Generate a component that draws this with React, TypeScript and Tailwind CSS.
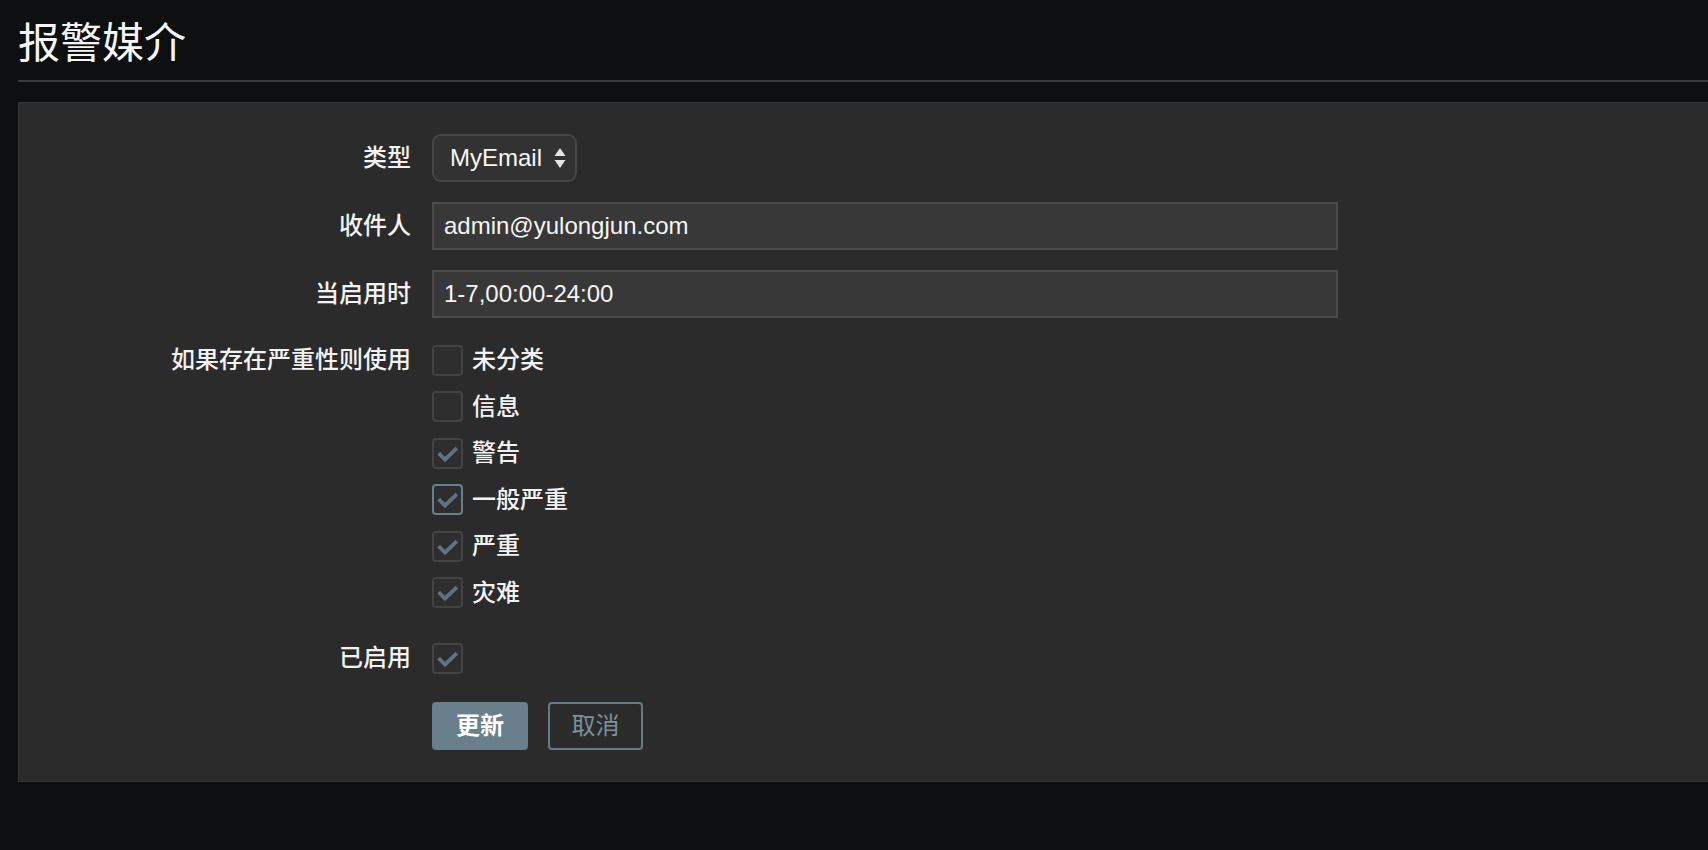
import React, { useState } from "react";

const font = { fontFamily: '"Liberation Sans", "Noto Sans CJK SC", sans-serif' };

type Severity = { label: string; checked: boolean; focus?: boolean };

function CheckBox({ checked, focus }: { checked: boolean; focus?: boolean }) {
  return (
    <span
      className={`flex h-[31px] w-[31px] shrink-0 items-center justify-center rounded-[4px] border-2 bg-[#2e2e2e] ${
        focus ? "border-[#687f8d]" : "border-[#434343]"
      }`}
    >
      {checked && (
        <svg width="31" height="31" viewBox="0 0 31 31" className="-m-[2px]">
          <path d="M8 16.5 L13 21.5 L23.5 11.5" fill="none" stroke="#5f7482" strokeWidth="3.8" strokeLinecap="square" />
        </svg>
      )}
    </span>
  );
}

function Row({ label, children, className = "" }: { label: string; children: React.ReactNode; className?: string }) {
  return (
    <div className={`flex items-center ${className}`}>
      <div className="w-[392px] shrink-0 text-right text-[24px] font-medium text-[#f2f2f2]">{label}</div>
      <div className="ml-[21px] flex-1">{children}</div>
    </div>
  );
}

export default function App() {
  const [sev, setSev] = useState<Severity[]>([
    { label: "未分类", checked: false },
    { label: "信息", checked: false },
    { label: "警告", checked: true },
    { label: "一般严重", checked: true, focus: true },
    { label: "严重", checked: true },
    { label: "灾难", checked: true },
  ]);

  const toggle = (i: number) =>
    setSev((prev) => prev.map((s, j) => (j === i ? { ...s, checked: !s.checked } : s)));

  return (
    <div className="min-h-[850px] overflow-hidden bg-[#0e0f11] text-white" style={font}>
      {/* 标题 */}
      <div className="ml-[18px] h-[82px] border-b-2 border-[#3b3b3b]">
        <h1 className="pt-[20px] text-[42px] leading-[48px] font-normal text-[#f5f5f5]">报警媒介</h1>
      </div>

      {/* 表单 */}
      <div className="ml-[18px] mt-[20px] mr-[-4px] border border-[#363636] bg-[#2b2b2b] pt-[31px] pb-[31px]">
        <Row label="类型">
          <div className="flex h-[48px] w-[145px] items-center justify-between rounded-[9px] border-2 border-[#464646] bg-[#323232] pl-[16px] pr-[9px] text-[24px] text-[#f5f5f5]">
            <span>MyEmail</span>
            <svg width="12" height="24" viewBox="0 0 12 24">
              <path d="M6 2 L11.5 10 L0.5 10 Z" fill="#e6e6e6" />
              <path d="M6 22 L11.5 14 L0.5 14 Z" fill="#e6e6e6" />
            </svg>
          </div>
        </Row>

        <Row label="收件人" className="mt-[20px]">
          <div className="flex h-[48px] w-[906px] items-center border-2 border-[#4a4a4a] bg-[#383838] pl-[10px] text-[24px] text-[#f5f5f5]">
            admin@yulongjun.com
          </div>
        </Row>

        <Row label="当启用时" className="mt-[20px]">
          <div className="flex h-[48px] w-[906px] items-center border-2 border-[#4a4a4a] bg-[#383838] pl-[10px] text-[24px] text-[#f5f5f5]">
            1-7,00:00-24:00
          </div>
        </Row>

        <div className="mt-[19px] flex">
          <div className="flex h-[46px] w-[392px] shrink-0 items-center justify-end text-[24px] font-medium text-[#f2f2f2]">
            如果存在严重性则使用
          </div>
          <div className="ml-[21px] flex flex-col">
            {sev.map((s, i) => (
              <label key={s.label} className="flex h-[46.5px] cursor-pointer items-center" onClick={() => toggle(i)}>
                <CheckBox checked={s.checked} focus={s.focus} />
                <span className="ml-[9px] text-[24px] font-medium text-[#f2f2f2]">{s.label}</span>
              </label>
            ))}
          </div>
        </div>

        <Row label="已启用" className="mt-[19px] h-[46px]">
          <CheckBox checked />
        </Row>

        <div className="mt-[21px] flex pl-[413px]">
          <button className="h-[48px] w-[96px] rounded-[4px] bg-[#6a7f8c] text-[24px] font-bold text-white">更新</button>
          <button className="ml-[20px] h-[48px] w-[95px] rounded-[4px] border-2 border-[#657b88] text-[24px] text-[#7c909c]">
            取消
          </button>
        </div>
      </div>
    </div>
  );
}
